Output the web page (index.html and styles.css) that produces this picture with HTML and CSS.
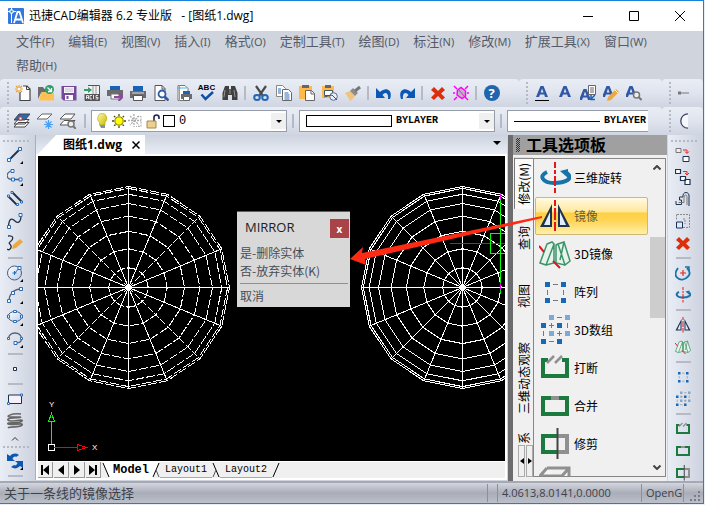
FILE: index.html
```
<!DOCTYPE html>
<html lang="zh-CN">
<head>
  <meta charset="UTF-8">
  <meta name="viewport" content="width=device-width, initial-scale=1.0">
  <title>迅捷CAD编辑器 6.2 专业版 - [图纸1.dwg]</title>
  <link rel="stylesheet" href="styles.css">
</head>
<body>
  <!-- Icon library -->
  <svg class="icon-library" aria-hidden="true">
    <defs>
      <linearGradient id="sky" x1="0" y1="0" x2="1" y2="1"><stop offset="0" stop-color="#fff"/><stop offset="1" stop-color="#b9cdec"/></linearGradient>
      <linearGradient id="bulb" x1="0" y1="0" x2="1" y2="1"><stop offset="0" stop-color="#fffbb0"/><stop offset="1" stop-color="#c9b800"/></linearGradient>
    </defs>
    <symbol id="i-new" viewBox="0 0 16 16"><path d="M5 7v8.500h10V4l-3-3H8" fill="#fff" stroke="#444" stroke-width="1.200"/><path d="M11.500 1v3.500H15" fill="none" stroke="#444"/><path d="M4 0v8M0 4h8M1 1l6 6M7 1L1 7" stroke="#f0a030" stroke-width="1.200"/><circle cx="4" cy="4" r="1.500" fill="#fff"/></symbol>
    <symbol id="i-open" viewBox="0 0 16 16"><path d="M0 2h5l1.500 2H10v4H3L0 14z" fill="#6b6b6b"/><path d="M3.500 7H14l2 1v7.500H1z" fill="#ffc051"/><circle cx="11.500" cy="4.500" r="4.500" fill="#2e9e6b"/><path d="M9.500 2.500l4 4M13.500 3v3.500H10" fill="none" stroke="#fff" stroke-width="1.300"/></symbol>
    <symbol id="i-save" viewBox="0 0 16 16"><path d="M.500 1h15v14.500h-13l-2-2z" fill="#76489b"/><path d="M3 2h10v6H3z" fill="#f6f1fa"/><path d="M4 4h8M4 6h8" stroke="#c4c4c4"/><path d="M4 10h8v5H4z" fill="#fff"/><path d="M5.500 11h2v3h-2z" fill="#76489b"/></symbol>
    <symbol id="i-acis" viewBox="0 0 16 16"><path d="M4 .500h11.500v15H1V9" fill="#f2f2f2" stroke="#555"/><path d="M0 5h5" stroke="#2e9e6b" stroke-width="2"/><path d="M4 2l4 3-4 3z" fill="#2e9e6b"/><path d="M9 1v8M12 1v8" stroke="#999"/><path d="M1 9h15v6.500H1z" fill="#555"/><path d="M2.500 14v-3.500h2V14M2.500 12.500h2M8 10.500H6V14h2M9.500 10v4M14 10.500h-2v2h2V14h-2.500" fill="none" stroke="#fff" stroke-width=".8"/></symbol>
    <symbol id="i-print" viewBox="0 0 16 16"><path d="M3 1h10v5H3z" fill="#1c62b4"/><path d="M0 6h16v7H0z" fill="#6b6b6b"/><path d="M3.500 10.500h9v5h-9z" fill="#fff" stroke="#555"/><path d="M2 8h12" stroke="#ddd"/></symbol>
    <symbol id="i-print-send" viewBox="0 0 16 16"><path d="M3 1h10v4H3z" fill="#1c62b4"/><path d="M0 5h16v6H0z" fill="#6b6b6b"/><path d="M4 9h8v5H4z" fill="#fff" stroke="#777"/><path d="M7 12h8M11.500 8l4 4-4 4" fill="none" stroke="#8c4a9e" stroke-width="2"/></symbol>
    <symbol id="i-preview" viewBox="0 0 16 16"><path d="M2 .500h7l3 3v12H2z" fill="#fff" stroke="#555"/><path d="M9 .500V4h3" fill="none" stroke="#555"/><circle cx="9" cy="9" r="3.500" fill="#fff" stroke="#2a5ca8" stroke-width="1.800"/><path d="M11.500 11.500l4 4" stroke="#2a5ca8" stroke-width="2.500"/></symbol>
    <symbol id="i-page" viewBox="0 0 16 16"><path d="M2 .500h7l3 3v12H2z" fill="#fff" stroke="#777"/><path d="M3.500 0v16M1 3h10" stroke="#4bb4e0"/><path d="M7 6h7v3H7z" fill="#1c62b4"/><path d="M5 9h11v5H5z" fill="#6b6b6b"/><path d="M7.500 11.500h6v4h-6z" fill="#fff" stroke="#666"/></symbol>
    <symbol id="i-spell" viewBox="0 0 16 16"><path d="M2.500 9.500l4 4.500 7.500-7" fill="none" stroke="#0b4fa8" stroke-width="2.500"/></symbol>
    <symbol id="i-find" viewBox="0 0 16 16"><path d="M3 1h4v3h2V1h4l2.500 7v7H10v-5H6v5H.500V8z" fill="#404040"/><path d="M3 5l-1 7M12 5l1 7M8 4v5" stroke="#aaa" stroke-width=".8"/></symbol>
    <symbol id="i-cut" viewBox="0 0 16 16"><path d="M3 1l7 10M13 1L6 11" stroke="#4b4b4b" stroke-width="2.200"/><ellipse cx="4" cy="12.500" rx="2.800" ry="2.500" fill="none" stroke="#2468b4" stroke-width="2"/><ellipse cx="12" cy="12.500" rx="2.800" ry="2.500" fill="none" stroke="#2468b4" stroke-width="2"/></symbol>
    <symbol id="i-copy" viewBox="0 0 16 16"><path d="M.500.500h6l3 3v8h-9z" fill="#fff" stroke="#888"/><path d="M2 4h3M2 6h3M2 8h3" stroke="#2a6cb4"/><path d="M6.500 4.500h6l3 3v8h-9z" fill="#fff" stroke="#666"/><path d="M8.500 8h4M8.500 10h5M8.500 12h5M8.500 14h5" stroke="#2a6cb4"/></symbol>
    <symbol id="i-paste" viewBox="0 0 16 16"><path d="M0 1h13v13H0z" fill="#fdb94a"/><path d="M3 0h7v3H3z" fill="#666"/><path d="M6.500 5.500h6l3 3v7h-9z" fill="#fff" stroke="#666"/><path d="M12 5.500V9h3.500" fill="none" stroke="#666"/></symbol>
    <symbol id="i-paste-block" viewBox="0 0 16 16"><path d="M0 1h12v12H0z" fill="#fdb94a"/><path d="M3 0h6v3H3z" fill="#666"/><path d="M2.500 5.500h8v5h-8z" fill="#fff" stroke="#456"/><circle cx="11.500" cy="11.500" r="3.800" fill="#e6eefb" stroke="#5a6b8c"/><path d="M2 12l8-2 5 5" fill="none" stroke="#456"/></symbol>
    <symbol id="i-brush" viewBox="0 0 16 16"><path d="M0 8l5-2 5 5-4 5c-2-1-3-4-6-8z" fill="#efc47e"/><path d="M5 6l3-3 5 5-3 3z" fill="#8c8c8c"/><path d="M10 6l5-4" stroke="#777" stroke-width="3"/></symbol>
    <symbol id="i-undo" viewBox="0 0 16 16"><path d="M0 3v10h9L6.500 10C9 6 13 8 12 14h2C17 6 11 1 4 7z" fill="#0b57b4"/></symbol>
    <symbol id="i-redo" viewBox="0 0 16 16"><path d="M16 3v10H7l2.500-3C7 6 3 8 4 14H2C-1 6 5 1 12 7z" fill="#0b57b4"/></symbol>
    <symbol id="i-delete" viewBox="0 0 16 16"><path d="M4 2l4 4 4-4 3 3-4 3.500 4 4L12 15l-4-4-4 4-3-2.500 4-4L1 5z" fill="#dc2e08"/></symbol>
    <symbol id="i-purge" viewBox="0 0 16 16"><path d="M1 1l3 3M15 1l-3 3M1 15l3-3M15 15l-3-3M0 8h2M14 8h2" stroke="#f0f" stroke-width="1.500"/><path d="M4.500 5L8 2.500 12.500 6v5L9 13.500 4 10z" fill="#bbb" stroke="#f0f" stroke-width="1.500"/><path d="M5 4l7 8" stroke="#f0f"/></symbol>
    <symbol id="i-layers" viewBox="0 0 16 16"><path d="M4 9.500h11L11 14H0zM4 6.500h11L11 11H0z" fill="#fff" stroke="#444"/><path d="M5 1h11l-5 6H0z" fill="#2a6cb4" stroke="#444"/><path d="M5 4h3v3H5z" fill="#fff" stroke="#e21"/></symbol>
    <symbol id="i-layer-freeze" viewBox="0 0 16 16"><path d="M5 1h10l-5 5H0z" fill="#fff" stroke="#666"/><path d="M11.500 7v9M7 11.500h9M8.500 8.500l6 6M14.500 8.500l-6 6" stroke="#4aa0f0" stroke-width="1.200"/></symbol>
    <symbol id="i-layer-find" viewBox="0 0 16 16"><path d="M4 7.500h11L11 12H0zM5 1h10l-4 5H0z" fill="#fff" stroke="#555"/><circle cx="11" cy="11" r="3" fill="#eee" stroke="#777" stroke-width="1.500"/><path d="M13 13l3 3" stroke="#777" stroke-width="2"/></symbol>
    <symbol id="i-bulb" viewBox="0 0 16 16"><path d="M8 0a5.500 5.500 0 0 1 3 9.500V12H5.500V9.500A5.500 5.500 0 0 1 8 0z" fill="url(#bulb)" stroke="#b5a500" stroke-width=".6"/><path d="M5.500 12h5.500v3h-4z" fill="#7b93a8"/></symbol>
    <symbol id="i-sun" viewBox="0 0 16 16"><path d="M8 1v14M1 8h14M3 3l10 10M13 3L3 13" stroke="#554b00" stroke-width="1.300" stroke-dasharray="2 1"/><circle cx="8" cy="8" r="4.200" fill="#ff0" stroke="#7b7000"/></symbol>
    <symbol id="i-vpfreeze" viewBox="0 0 16 16"><path d="M6 1v13M0 7.500h13M2 3l9 9M11 3l-9 9" stroke="#aaa" stroke-width="1.300" stroke-dasharray="2 1"/><path d="M9 3.500h4v10H8" fill="none" stroke="#aaa" stroke-dasharray="2 1"/></symbol>
    <symbol id="i-lock" viewBox="0 0 16 16"><path d="M9 8V4.500a2.500 2.500 0 0 1 5 0V6" fill="none" stroke="#225" stroke-width="1.600"/><path d="M2 8h9v7H2z" fill="#edcf8f" stroke="#a88b45"/></symbol>
    <symbol id="i-style" viewBox="0 0 16 16"><path d="M2 12L6.500 1h3L14 12h-3l-.8-2.500H6L5 12zM6.700 7.500h2.800L8 3.500z" fill="#2f57a5" fill-rule="evenodd"/></symbol>
    <symbol id="i-page-corner" viewBox="0 0 16 16"><path d="M8.500.500h7v9h-7z" fill="#fff" stroke="#666"/><path d="M10 3h4M10 5h4M10 7h4" stroke="#666"/><path d="M15 10l-4 4M11 10v4.500h4" fill="none" stroke="#1c62b4" stroke-width="1.500"/></symbol>
    <symbol id="i-pencil" viewBox="0 0 16 16"><path d="M4 16l1-4 8-8 3 3-8 8z" fill="#eda83f"/><path d="M12 5l3 3" stroke="#fff"/></symbol>
    <symbol id="i-loupe" viewBox="0 0 16 16"><circle cx="10.500" cy="10" r="3" fill="#eee" stroke="#777" stroke-width="1.500"/><path d="M12.500 12l3 3" stroke="#777" stroke-width="2"/></symbol>
    <symbol id="i-dash" viewBox="0 0 16 16"><path d="M3 8h9" stroke="#777"/><path d="M1 6.500h3v3H1z" fill="#777"/></symbol>
    <symbol id="i-halfarc" viewBox="0 0 16 16"><path d="M11 .8A7.200 7.200 0 1 0 11 15.200z" fill="#f5f8fd"/><path d="M11 .8A7.200 7.200 0 1 0 11 15.200" fill="none" stroke="#446" stroke-width="1.300"/></symbol>

    <!-- draw tools -->
    <symbol id="i-line" viewBox="0 0 16 16"><path d="M2 13L13 2" stroke="#203048" stroke-width="1.800"/><path d="M.500 11.500h3v3h-3zM11.500.500h3v3h-3z" fill="#fff" stroke="#2a6cb4"/></symbol>
    <symbol id="i-pline" viewBox="0 0 16 16"><path d="M5 1.500C-2 4-1 10 5 10.500h8" fill="none" stroke="#4b6282" stroke-width="1.300"/><path d="M4 .500h3v3H4zM4.500 9h3v3h-3zM12 9h3v3h-3z" fill="#fff" stroke="#2a6cb4"/></symbol>
    <symbol id="i-mline" viewBox="0 0 16 16"><path d="M1 5l9 9M5 1l10 10" stroke="#203048" stroke-width="1.800"/><path d="M.500 4h2v2h-2zM4 .500h2v2H4zM9.500 12.500h2v2h-2zM13.500 10h2v2h-2z" fill="#fff" stroke="#2a6cb4"/></symbol>
    <symbol id="i-spline" viewBox="0 0 16 16"><path d="M1.500 14C2 3 6 6 8 8s6 3 6-6" fill="none" stroke="#203048" stroke-width="1.300"/><path d="M.500 12.500h3v3h-3zM12 .500h3v3h-3z" fill="#fff" stroke="#2a6cb4"/></symbol>
    <symbol id="i-sketch" viewBox="0 0 16 16"><path d="M1 1c7-1 5 4 2 6s4 3 0 7c-1 1-2 1-3 0" fill="none" stroke="#203048" stroke-width="1.300"/><path d="M5 14l1-4 7-6 3 3-7 6z" fill="#eda83f"/></symbol>
    <symbol id="i-circle" viewBox="0 0 16 16"><circle cx="7.500" cy="8" r="7" fill="url(#sky)" stroke="#4b5f7e"/><path d="M7.500 6v4M5.500 8h4M8 8l4-5" stroke="#2a6cb4"/><path d="M11 1.500h3v3h-3z" fill="#fff" stroke="#2a6cb4"/></symbol>
    <symbol id="i-arc" viewBox="0 0 16 16"><path d="M2 14C2 7 7 2 14 2" fill="none" stroke="#4b5f7e" stroke-width="1.300"/><path d="M.500 12.500h3v3h-3zM4.500 4.500h3v3h-3zM12.500.500h3v3h-3z" fill="#fff" stroke="#2a6cb4"/></symbol>
    <symbol id="i-ellipse" viewBox="0 0 16 16"><ellipse cx="8" cy="7.500" rx="7" ry="5" fill="url(#sky)" stroke="#4b5f7e"/><path d="M.500 6h2v3h-2zM13.500 6h2v3h-2zM6.500 1.500h3v2h-3zM6.500 11.500h3v2h-3z" fill="#fff" stroke="#2a6cb4"/></symbol>
    <symbol id="i-earc" viewBox="0 0 16 16"><path d="M1.500 8C1 0 15 0 14.500 8c0 3-3 4-6 4" fill="none" stroke="#4b5f7e" stroke-width="1.300"/><path d="M.500 6.500h2v2h-2zM13.500 6.500h2v2h-2zM7 10.500h3v3H7z" fill="#fff" stroke="#2a6cb4"/></symbol>
    <symbol id="i-point" viewBox="0 0 16 16"><path d="M6.500 6.500h3v3h-3z" fill="#fff" stroke="#203048"/></symbol>
    <symbol id="i-rect" viewBox="0 0 16 16"><path d="M1.500 4h13v8.500h-13z" fill="#f4f1fa" stroke="#203048"/><path d="M.500 11.500h2v2h-2zM13.500 3h2v2h-2z" fill="#fff" stroke="#2a6cb4"/></symbol>
    <symbol id="i-helix" viewBox="0 0 16 16"><path d="M14 1C4 0-3 4 4 4h9c4 1-14 0-12 3s16-2 14 1-16 1-14 3 16-2 14 1-12 1-14 3" fill="none" stroke="#666" stroke-width="1.600"/></symbol>
    <symbol id="i-refresh" viewBox="0 0 16 16"><path d="M0 1l3 2c3-3 6-3 9-1L9 4C8 3 6 4 5.500 6L8 8H0zM16 15l-3-2c-3 3-6 3-9 1l3-2c1 1 3 0 3.500-2L8 8h8z" fill="#0b57b4"/></symbol>

    <!-- modify tools -->
    <symbol id="i-copy-obj" viewBox="0 0 16 16"><path d="M1 1.500h5v4H1z" fill="#eee" stroke="#777"/><path d="M8 3h4v3M10 4.500l2 2 2-2" fill="none" stroke="#e22"/><path d="M8 9.500h6v5H8z" fill="#fff" stroke="#1d3350"/></symbol>
    <symbol id="i-copy-multi" viewBox="0 0 16 16"><path d="M.500.500h5v4h-5zM5.500 7.500h5v4h-5zM10 10.500h5v5h-5z" fill="#fff" stroke="#1d3350" stroke-width="1.200"/><path d="M8 2.500h4v3M10 4l2 2 2-2" fill="none" stroke="#e22"/></symbol>
    <symbol id="i-offset" viewBox="0 0 16 16"><path d="M1 13.500h5.500V9h-2V6H8c-1-6 7-6 6 0v9M1 10v3.500" fill="none" stroke="#1d3350"/><path d="M3.500 11.500H9V7.500C9 3 12 3 12 6v8" fill="none" stroke="#777"/></symbol>
    <symbol id="i-scale" viewBox="0 0 16 16"><path d="M2 1.500h12.500v13H8M1.500 1.500V7M8 6h2v5" fill="none" stroke="#888" stroke-dasharray="2 1"/><path d="M1.500 9h6v6h-6z" fill="#dceaff" stroke="#1d3350"/></symbol>
    <symbol id="i-rotate" viewBox="0 0 16 16"><path d="M3 3C-4 13 6 15 8 14.500S19 10 12 3" fill="none" stroke="#1874a8" stroke-width="1.800"/><path d="M10 2h4v4" fill="none" stroke="#1874a8" stroke-width="1.500"/><path d="M8 5v6M5 8h6" stroke="#e22" stroke-width="1.200"/></symbol>
    <symbol id="i-rotate3d" viewBox="0 0 32 32"><path d="M8 10C-1 14 4 21 15 21s20-4 13-10" fill="none" stroke="#1874a8" stroke-width="4"/><path d="M21 9l8-2v9z" fill="#1874a8"/><path d="M16 0v6M16 8v4M16 14v10M16 26v5" stroke="#e8141c" stroke-width="2"/></symbol>
    <symbol id="i-mirror" viewBox="0 0 32 32"><path d="M13 4v23H1zM19 4v23h12z" fill="#1d3350"/><path d="M11 12v13H5zM21 12v13h6z" fill="#e2edfb"/><path d="M16 0v6M16 8v12M16 22v9" stroke="#e8141c" stroke-width="2"/></symbol>
    <symbol id="i-mirror3d" viewBox="0 0 32 32"><path d="M8 6l5-2 2 2-8 21-6-2zM13 4l2 2v19l-8 2M19 6l6-2 6 19-5 4zM19 6l-2 1v18l9 2M25 4l-4 18" fill="#e7f4ec" stroke="#3d9468" stroke-width="1.500"/><path d="M0 8l5 6M14 23l7 7" stroke="#e8141c" stroke-width="2"/></symbol>
    <symbol id="i-array" viewBox="0 0 32 32"><path d="M6 6h5v5H6zM22 6h5v5h-5zM6 22h5v5H6zM22 22h5v5h-5z" fill="#1768b8"/><path d="M14 8.500h5M14 24.500h5M8.500 14v5M24.500 14v5" stroke="#777"/></symbol>
    <symbol id="i-array3d" viewBox="0 0 32 32"><path d="M10 1h5v5h-5zM26 1h5v5h-5zM10 17h5v5h-5zM26 17h5v5h-5z" fill="#7fa9d4"/><path d="M2 9h5v5H2zM18 9h5v5h-5zM2 25h5v5H2zM18 25h5v5h-5z" fill="#1768b8"/><path d="M18 3.500h5M10 11.500h5M12.500 9v5M28.500 9v5M4.500 17v5M18 19.500h5M20.500 17v5M10 27.500h5" stroke="#777"/></symbol>
    <symbol id="i-break" viewBox="0 0 32 32"><path d="M9 8H4v16h24V8h-5" fill="none" stroke="#1c7a3e" stroke-width="4"/><path d="M8 11l7-7M16 11l7-7" stroke="#909090" stroke-width="2.500"/></symbol>
    <symbol id="i-join" viewBox="0 0 32 32"><path d="M4 8h24v16H4z" fill="none" stroke="#1c7a3e" stroke-width="4"/><path d="M12 6h8v4h-8z" fill="#909090"/></symbol>
    <symbol id="i-trim" viewBox="0 0 32 32"><path d="M19 8h9v16h-9" fill="none" stroke="#909090" stroke-width="4"/><path d="M18 8H4v16h14" fill="none" stroke="#1c7a3e" stroke-width="4"/><path d="M18.500 0v31" stroke="#444" stroke-width="2"/></symbol>
    <symbol id="i-extend" viewBox="0 0 32 32"><path d="M8 2h22v16h-8M8 2L1 10h22l7-8" fill="#f5f5f5" stroke="#909090" stroke-width="3"/></symbol>
  </svg>

  <div class="window">
    <header class="title-bar">
      <svg class="app-logo" viewBox="0 0 16 16"><rect width="16" height="16" rx="1" fill="#3478dc"/><path d="M3.500 0v15M0 3.500h8" stroke="#fff"/><path d="M2 2h3v3H2z" fill="#3478dc" stroke="#fff"/><path d="M6 15l3.500-11h2L15 15M7.500 11.500H13" fill="none" stroke="#fff" stroke-width="1.800"/></svg>
      <h1>迅捷CAD编辑器 6.2 专业版 &nbsp;&nbsp;- [图纸1.dwg]</h1>
      <div class="window-controls">
        <button aria-label="最小化"><svg viewBox="0 0 10 10"><path d="M0 5.500h10"/></svg></button>
        <button aria-label="最大化"><svg viewBox="0 0 10 10"><path d="M.500.500h9v9h-9z"/></svg></button>
        <button aria-label="关闭"><svg viewBox="0 0 10 10"><path d="M0 0l10 10M10 0L0 10"/></svg></button>
      </div>
    </header>

    <nav class="menu-bar">
      <button>文件<small>(F)</small></button>
      <button>编辑<small>(E)</small></button>
      <button>视图<small>(V)</small></button>
      <button>插入<small>(I)</small></button>
      <button>格式<small>(O)</small></button>
      <button>定制工具<small>(T)</small></button>
      <button>绘图<small>(D)</small></button>
      <button>标注<small>(N)</small></button>
      <button>修改<small>(M)</small></button>
      <button>扩展工具<small>(X)</small></button>
      <button>窗口<small>(W)</small></button>
      <button>帮助<small>(H)</small></button>
    </nav>

    <div class="toolbar-row">
      <div class="toolbar main-tools">
        <span class="grip"></span>
        <button class="tool" aria-label="新建"><svg><use href="#i-new"/></svg></button>
        <button class="tool" aria-label="打开"><svg><use href="#i-open"/></svg></button>
        <button class="tool" aria-label="保存"><svg><use href="#i-save"/></svg></button>
        <button class="tool" aria-label="导入ACIS"><svg><use href="#i-acis"/></svg></button>
        <button class="tool" aria-label="发布"><svg><use href="#i-print-send"/></svg></button>
        <button class="tool" aria-label="打印"><svg><use href="#i-print"/></svg></button>
        <button class="tool" aria-label="打印预览"><svg><use href="#i-preview"/></svg></button>
        <button class="tool" aria-label="页面设置"><svg><use href="#i-page"/></svg></button>
        <button class="tool spell" aria-label="拼写检查"><span>ABC</span><svg><use href="#i-spell"/></svg></button>
        <button class="tool" aria-label="查找"><svg><use href="#i-find"/></svg></button>
        <span class="separator"></span>
        <button class="tool" aria-label="剪切"><svg><use href="#i-cut"/></svg></button>
        <button class="tool" aria-label="复制"><svg><use href="#i-copy"/></svg></button>
        <button class="tool" aria-label="粘贴"><svg><use href="#i-paste"/></svg></button>
        <button class="tool" aria-label="粘贴为块"><svg><use href="#i-paste-block"/></svg></button>
        <button class="tool" aria-label="特性匹配"><svg><use href="#i-brush"/></svg></button>
        <span class="separator"></span>
        <button class="tool" aria-label="撤消"><svg><use href="#i-undo"/></svg></button>
        <button class="tool" aria-label="重做"><svg><use href="#i-redo"/></svg></button>
        <span class="separator"></span>
        <button class="tool" aria-label="删除"><svg><use href="#i-delete"/></svg></button>
        <button class="tool" aria-label="清理"><svg><use href="#i-purge"/></svg></button>
        <span class="separator"></span>
        <button class="tool" aria-label="帮助"><span class="help-mark">?</span></button>
      </div>
      <div class="toolbar text-tools">
        <span class="grip"></span>
        <button class="tool underlined" aria-label="多行文字"><svg><use href="#i-style"/></svg></button>
        <button class="tool" aria-label="单行文字"><svg><use href="#i-style"/></svg></button>
        <button class="tool" aria-label="文字样式"><svg><use href="#i-style" x="-3" y="3"/><use href="#i-page-corner"/></svg></button>
        <button class="tool" aria-label="编辑文字"><svg><use href="#i-style" x="-3"/><use href="#i-pencil"/></svg></button>
        <button class="tool" aria-label="查找文字"><svg><use href="#i-style" x="-3"/><use href="#i-loupe"/></svg></button>
      </div>
      <div class="toolbar edge-tools">
        <span class="grip"></span>
        <button class="tool" aria-label="标注"><svg><use href="#i-dash"/></svg></button>
      </div>
    </div>

    <div class="toolbar-row">
      <div class="toolbar layer-tools">
        <span class="grip"></span>
        <button class="tool" aria-label="图层"><svg><use href="#i-layers"/></svg></button>
        <button class="tool" aria-label="冻结图层"><svg><use href="#i-layer-freeze"/></svg></button>
        <button class="tool" aria-label="图层查找"><svg><use href="#i-layer-find"/></svg></button>
        <span class="separator"></span>
        <button class="combo layer-combo" aria-label="当前图层">
          <svg><use href="#i-bulb"/></svg><svg><use href="#i-sun"/></svg><svg><use href="#i-vpfreeze"/></svg><svg><use href="#i-lock"/></svg>
          <span class="swatch"></span><span>0</span><span class="drop"></span>
        </button>
        <span class="separator"></span>
        <button class="combo" aria-label="颜色"><span class="color-box"></span><span>BYLAYER</span><span class="drop"></span></button>
        <span class="separator"></span>
        <button class="combo line-combo" aria-label="线型"><span class="line-sample"></span><span>BYLAYER</span></button>
      </div>
      <div class="toolbar edge-tools">
        <span class="grip"></span>
        <button class="tool" aria-label="圆弧"><svg><use href="#i-halfarc"/></svg></button>
      </div>
    </div>

    <main class="workspace">
      <aside class="side-tools">
        <span class="grip"></span>
        <button class="tool more" aria-label="直线"><svg><use href="#i-line"/></svg></button>
        <button class="tool more" aria-label="多段线"><svg><use href="#i-pline"/></svg></button>
        <button class="tool" aria-label="多线"><svg><use href="#i-mline"/></svg></button>
        <button class="tool" aria-label="样条曲线"><svg><use href="#i-spline"/></svg></button>
        <button class="tool" aria-label="草图"><svg><use href="#i-sketch"/></svg></button>
        <span class="separator"></span>
        <button class="tool more" aria-label="圆"><svg><use href="#i-circle"/></svg></button>
        <button class="tool more" aria-label="圆弧"><svg><use href="#i-arc"/></svg></button>
        <button class="tool more" aria-label="椭圆"><svg><use href="#i-ellipse"/></svg></button>
        <button class="tool more" aria-label="椭圆弧"><svg><use href="#i-earc"/></svg></button>
        <span class="separator"></span>
        <button class="tool" aria-label="点"><svg><use href="#i-point"/></svg></button>
        <span class="separator"></span>
        <button class="tool" aria-label="矩形"><svg><use href="#i-rect"/></svg></button>
        <button class="tool" aria-label="螺旋"><svg><use href="#i-helix"/></svg></button>
        <button class="expand" aria-label="更多"><svg viewBox="0 0 8 4"><path d="M1 3.500l3-3 3 3" fill="none" stroke="#333"/></svg></button>
        <span class="grip"></span>
        <button class="tool more" aria-label="刷新"><svg><use href="#i-refresh"/></svg></button>
        <span class="separator"></span>
      </aside>

      <section class="document">
        <div class="doc-tabs">
          <div class="doc-tab"><span>图纸1.dwg</span><button aria-label="关闭图纸"><svg viewBox="0 0 8 8"><path d="M.500.500l7 7M7.500.500l-7 7" stroke="#000" stroke-width="1.500"/></svg></button></div>
          <button class="drop" aria-label="图纸列表"></button>
        </div>
        <div class="viewport">
          <svg class="drawing" id="drawing">
            <g id="wires" fill="none" stroke="#fff" shape-rendering="crispEdges"></g>
            <g fill="none" shape-rendering="crispEdges">
              <path d="M412 87.500h56" stroke="#f00"/>
              <path d="M452.500 77.500h30v20h-30zM462.500 37v101" stroke="#0f0"/>
              <path d="M462.500 37v6M462.500 127v7" stroke="#f0f"/>
              <path d="M10.500 288.500h6v6h-6z" stroke="#fff"/>
              <path d="M13.500 288v-23M10.500 265.500h6l-3-8z" stroke="#0f0"/>
              <path d="M16 291.500h24M39.500 288.500v6l9-3z" stroke="#f00"/>
            </g>
            <text x="11" y="251">Y</text>
            <text x="54" y="294">X</text>
          </svg>
          <div class="prompt">
            <div class="prompt-head"><strong>MIRROR</strong><button aria-label="关闭">x</button></div>
            <button>是-删除实体</button>
            <button>否-放弃实体(K)</button>
            <hr>
            <button>取消</button>
          </div>
        </div>
        <div class="layout-tabs">
          <button class="step" aria-label="第一个"><svg viewBox="0 0 10 10"><path d="M1 0h2v10H1zM9 0v10L3 5z"/></svg></button>
          <button class="step" aria-label="上一个"><svg viewBox="0 0 10 10"><path d="M8 0v10L2 5z"/></svg></button>
          <button class="step" aria-label="下一个"><svg viewBox="0 0 10 10"><path d="M2 0v10l6-5z"/></svg></button>
          <button class="step" aria-label="最后一个"><svg viewBox="0 0 10 10"><path d="M7 0h2v10H7zM1 0v10l6-5z"/></svg></button>
          <svg class="slant" viewBox="0 0 8 16"><path d="M1 0h7v16H7z" fill="#fff"/><path d="M1 1l6 14" stroke="#000"/></svg>
          <button class="layout active">Model</button>
          <svg class="slant" viewBox="0 0 8 16"><path d="M0 0h7L1 16H0z" fill="#fff"/><path d="M7 1L1 15" stroke="#000"/><path d="M4 8l3 7" stroke="#555"/></svg>
          <button class="layout">Layout1</button>
          <svg class="slant" viewBox="0 0 8 16"><path d="M1 1l6 14" stroke="#000"/><path d="M4 8l-3 7" stroke="#555"/></svg>
          <button class="layout">Layout2</button>
          <svg class="slant" viewBox="0 0 8 16"><path d="M7 1L1 15" stroke="#000"/></svg>
        </div>
      </section>

      <section class="palette">
        <h2><span class="dots"></span>工具选项板</h2>
        <div class="palette-body">
          <div class="palette-tabs">
            <button class="active">修改(M)</button>
            <button>查询</button>
            <button>视图</button>
            <button>三维动态观察</button>
            <button class="last">系</button>
            <div class="tab-scroll">
              <button aria-label="向左"><svg viewBox="0 0 4 6"><path d="M4 0v6L0 3z"/></svg></button>
              <button aria-label="向右"><svg viewBox="0 0 4 6"><path d="M0 0v6l4-3z"/></svg></button>
            </div>
          </div>
          <div class="palette-list">
            <div class="commands">
              <button><svg><use href="#i-rotate3d"/></svg>三维旋转</button>
              <button class="active"><svg><use href="#i-mirror"/></svg>镜像</button>
              <button><svg><use href="#i-mirror3d"/></svg>3D镜像</button>
              <button><svg><use href="#i-array"/></svg>阵列</button>
              <button><svg><use href="#i-array3d"/></svg>3D数组</button>
              <button><svg><use href="#i-break"/></svg>打断</button>
              <button><svg><use href="#i-join"/></svg>合并</button>
              <button><svg><use href="#i-trim"/></svg>修剪</button>
              <button aria-label="延伸"><svg><use href="#i-extend"/></svg></button>
            </div>
            <div class="scrollbar">
              <svg viewBox="0 0 8 5"><path d="M.500 4.500L4 1l3.500 3.500"/></svg>
              <span class="thumb"></span>
              <svg viewBox="0 0 8 5"><path d="M.500.500L4 4 7.500.500"/></svg>
            </div>
          </div>
        </div>
      </section>

      <aside class="side-tools modify-tools">
        <span class="grip"></span>
        <button class="tool" aria-label="复制实体"><svg><use href="#i-copy-obj"/></svg></button>
        <button class="tool" aria-label="多重复制"><svg><use href="#i-copy-multi"/></svg></button>
        <button class="tool" aria-label="偏移"><svg><use href="#i-offset"/></svg></button>
        <button class="tool" aria-label="缩放"><svg><use href="#i-scale"/></svg></button>
        <button class="tool" aria-label="删除"><svg><use href="#i-delete"/></svg></button>
        <span class="separator"></span>
        <button class="tool" aria-label="旋转"><svg><use href="#i-rotate"/></svg></button>
        <button class="tool" aria-label="三维旋转"><svg><use href="#i-rotate3d"/></svg></button>
        <span class="separator"></span>
        <button class="tool" aria-label="镜像"><svg><use href="#i-mirror"/></svg></button>
        <button class="tool" aria-label="3D镜像"><svg><use href="#i-mirror3d"/></svg></button>
        <span class="separator"></span>
        <button class="tool" aria-label="阵列"><svg><use href="#i-array"/></svg></button>
        <button class="tool" aria-label="3D数组"><svg><use href="#i-array3d"/></svg></button>
        <span class="separator"></span>
        <button class="tool" aria-label="打断"><svg><use href="#i-break"/></svg></button>
        <button class="tool" aria-label="合并"><svg><use href="#i-join"/></svg></button>
        <button class="tool" aria-label="修剪"><svg><use href="#i-trim"/></svg></button>
      </aside>

      <svg class="callout" viewBox="0 0 194 50"><path d="M0 43L13 31l-1 6L192 0v2L15 43l1 6z" fill="#ff2a14"/></svg>
    </main>

    <footer class="status-bar">
      <span class="message">关于一条线的镜像选择</span>
      <span class="spacer"></span>
      <span class="coords">4.0613,8.0141,0.0000</span>
      <span class="renderer">OpenG</span>
      <svg class="resize" viewBox="0 0 12 12"><path d="M9 1h2v2H9zM5 5h2v2H5zM9 5h2v2H9zM1 9h2v2H1zM5 9h2v2H5zM9 9h2v2H9z"/></svg>
    </footer>
  </div>

  <script>
    const SVG_NS = 'http://www.w3.org/2000/svg';
    const wires = document.getElementById('wires');
    const RADIUS = 101;
    const SIDES = 16;

    function addPath(d, dash) {
      const path = document.createElementNS(SVG_NS, 'path');
      path.setAttribute('d', d);
      if (dash) path.setAttribute('stroke-dasharray', dash);
      wires.appendChild(path);
    }

    // Top view of a sphere mesh: meridians plus latitude rings
    function drawSphere(cx, cy, dashed) {
      const point = (r, i) => {
        const a = i * 2 * Math.PI / SIDES;
        return (cx + r * Math.sin(a)).toFixed(1) + ' ' + (cy - r * Math.cos(a)).toFixed(1);
      };
      for (let i = 0; i < SIDES; i++) {
        addPath('M' + cx + ' ' + cy + 'L' + point(RADIUS, i), dashed && i % 4 === 2 ? '7 2' : '');
      }
      for (let k = 1; k <= SIDES / 2; k++) {
        const r = RADIUS * Math.sin(k * Math.PI / SIDES);
        const pts = [];
        for (let i = 0; i < SIDES; i++) pts.push(point(r, i));
        addPath('M' + pts.join('L') + 'Z', dashed ? '9 2' : '');
      }
    }

    drawSphere(90.5, 131.5, true);
    drawSphere(424.5, 131.5, false);
  </script>
</body>
</html>
```
FILE: styles.css
```
* {
  box-sizing: border-box;
}
body {
  margin: 0;
  background: #e9eef4;
  font-family: "Open Sans", "Noto Sans CJK SC", sans-serif;
  font-size: 12px;
  line-height: 16px;
}
button {
  margin: 0;
  padding: 0;
  border: none;
  background: none;
  font: inherit;
  color: inherit;
}
svg {
  display: block;
  flex: none;
}
.icon-library {
  position: absolute;
  width: 0;
  height: 0;
}
.window {
  display: flex;
  flex-direction: column;
  height: calc(100vh - 1px);
  margin-right: 1px;
  border: 1px solid #1883d7;
  border-left: none;
  background: #d0d4dd;
}

/* Title and menu */
.title-bar {
  display: flex;
  align-items: center;
  height: 30px;
  padding-left: 8px;
  background: #fff;
}
.app-logo {
  width: 16px;
  height: 16px;
  margin-right: 5px;
}
.title-bar h1 {
  flex: 1;
  margin: 0;
  font-size: 12px;
  font-weight: normal;
}
.window-controls {
  display: flex;
}
.window-controls button {
  display: grid;
  place-items: center;
  width: 46px;
  height: 29px;
}
.window-controls svg {
  width: 10px;
  height: 10px;
  fill: none;
  stroke: #000;
}
.menu-bar {
  display: flex;
  flex-wrap: wrap;
  gap: 4px 14px;
  padding: 0 16px 4px;
  color: #555b68;
  font-size: 13px;
}
.menu-bar button {
  height: 20px;
}
.menu-bar small {
  font-family: "Noto Sans", sans-serif;
  font-size: 11px;
}

/* Toolbars */
.toolbar-row {
  display: flex;
  flex: none;
  height: 28px;
}
.toolbar {
  display: flex;
  align-items: center;
  padding-left: 7px;
  border-radius: 4px;
  background: linear-gradient(#e9edf5, #dfe4ee 50%, #cfd5e1);
}
.main-tools {
  width: 519px;
}
.text-tools {
  flex: 1;
}
.layer-tools {
  flex: 1;
  min-width: 0;
}
.layer-tools .separator {
  margin: 0 5px;
}
.edge-tools {
  flex: none;
  width: 41px;
  overflow: hidden;
}
.grip {
  flex: none;
  width: 2px;
  height: 22px;
  margin-right: 2px;
  background: repeating-linear-gradient(#b4b9c4 0 2px, transparent 2px 4px);
}
.layer-tools .grip {
  margin-right: 1px;
}
.tool {
  position: relative;
  display: grid;
  flex: none;
  place-items: center;
  width: 23px;
  height: 22px;
}
.tool svg {
  width: 16px;
  height: 16px;
}
.separator {
  flex: none;
  width: 2px;
  height: 14px;
  margin: 0 3px;
  background: #b5bac5;
}
.spell span {
  position: absolute;
  top: 2px;
  font-family: "Liberation Sans", sans-serif;
  font-size: 8px;
  font-weight: bold;
  line-height: 8px;
}
.underlined {
  background: linear-gradient(#000, #000) center 18px / 14px 1px no-repeat;
}
.help-mark {
  width: 16px;
  height: 16px;
  border-radius: 50%;
  background: #1f66ad;
  color: #fff;
  font-size: 13px;
  font-weight: bold;
}
.combo {
  display: flex;
  flex: none;
  align-items: center;
  gap: 4px;
  width: 196px;
  height: 22px;
  padding-left: 6px;
  border: 1px solid #979da8;
  background: #fff;
  font-family: "Liberation Mono", monospace;
  font-size: 10px;
  font-weight: bold;
}
.combo svg {
  width: 16px;
  height: 16px;
  margin-right: -3px;
}
.layer-combo {
  padding-left: 2px;
  font-size: 12px;
  font-weight: normal;
}
.swatch {
  width: 12px;
  height: 12px;
  margin-left: 1px;
  border: 1px solid #000;
}
.color-box {
  width: 86px;
  height: 12px;
  border: 1px solid #000;
}
.line-combo {
  flex: 1;
  width: auto;
  margin-right: 14px;
  border-right: none;
}
.line-sample {
  width: 86px;
  height: 1px;
  background: #000;
}
.drop {
  display: grid;
  place-items: center;
  width: 15px;
  height: 16px;
  margin-left: auto;
}
.combo .drop {
  background: #f0f0f0;
}
.drop::after {
  content: "";
  border: 4px solid transparent;
  border-top-color: #000;
  border-bottom: none;
}
.combo .drop::after {
  border-width: 3px 3px 0;
}

/* Workspace */
.workspace {
  position: relative;
  display: flex;
  flex: 1;
  min-height: 0;
}
.side-tools {
  display: flex;
  flex: none;
  flex-direction: column;
  width: 35px;
  padding: 5px 0 0 3px;
  overflow: hidden;
  background: linear-gradient(90deg, #e9edf5, #cdd3df);
}
.side-tools .grip {
  width: 27px;
  height: 2px;
  margin: 0 0 2px;
  background: repeating-linear-gradient(90deg, #b4b9c4 0 2px, transparent 2px 4px);
}
.side-tools .separator {
  width: 15px;
  height: 2px;
  margin: 3px 5px;
}
.more::after {
  content: "";
  position: absolute;
  right: 3px;
  bottom: 2px;
  width: 3px;
  height: 3px;
  background: #000;
  clip-path: polygon(100% 0, 100% 100%, 0 100%);
}
.expand {
  display: grid;
  flex: none;
  place-items: center;
  width: 23px;
  height: 14px;
}
.expand svg {
  width: 8px;
  height: 4px;
}
.modify-tools {
  margin-left: 1px;
}
.document {
  display: flex;
  flex: 1;
  flex-direction: column;
  min-width: 0;
  margin-bottom: 1px;
  border-left: 1px solid #a9aeb9;
  background: #fff;
}
.doc-tabs {
  display: flex;
  height: 19px;
  padding-right: 3px;
  background: linear-gradient(#cdd3df, #e8edf5);
}
.doc-tab {
  display: flex;
  align-items: center;
  gap: 10px;
  padding: 0 5px 0 27px;
  clip-path: polygon(20px 0, 100% 0, 100% 100%, 2px 100%);
  background: #fff;
  font-weight: bold;
}
.doc-tab svg {
  width: 8px;
  height: 8px;
}
.viewport {
  position: relative;
  flex: 1;
  min-height: 0;
  margin: 2px 2px 1px;
  overflow: hidden;
  background: #000;
}
.drawing {
  width: 100%;
  height: 100%;
}
.drawing text {
  fill: #fff;
  font-family: "Liberation Sans", sans-serif;
  font-size: 8px;
}
.prompt {
  position: absolute;
  top: 55px;
  left: 199px;
  display: flex;
  flex-direction: column;
  width: 113px;
  padding-bottom: 2px;
  border-top: 1px solid #2b6ca8;
  background: #d8d8d8;
  color: #484c55;
}
.prompt > button {
  height: 18px;
  padding-left: 3px;
  font-family: "Noto Sans CJK SC", sans-serif;
  line-height: 16px;
  text-align: left;
}
.prompt-head {
  display: flex;
  justify-content: space-between;
  margin-bottom: 6px;
  padding: 7px 1px 0 8px;
  color: #222;
}
.prompt-head strong {
  font-size: 13px;
  font-weight: normal;
}
.prompt-head button {
  width: 19px;
  height: 19px;
  background: #a94347;
  color: #fff;
  font-size: 10px;
  font-weight: bold;
}
.prompt hr {
  width: 108px;
  height: 1px;
  margin: 3px 2px 3px 3px;
  border: none;
  background: #909090;
}
.layout-tabs {
  display: flex;
  height: 16px;
  margin: 0 2px 2px;
  background: #f0f0f0;
  font-family: "Liberation Mono", monospace;
  font-size: 10px;
}
.step {
  display: grid;
  place-items: center;
  width: 15px;
  height: 16px;
  margin-right: 1px;
  border-right: 1px solid #999;
  border-bottom: 1px solid #999;
}
.step svg {
  width: 10px;
  height: 10px;
}
.slant {
  width: 8px;
  height: 16px;
}
.layout {
  padding: 0 5px;
  border-bottom: 1px solid #aaa;
}
.layout.active {
  padding: 0 3px;
  border-color: #fff;
  background: #fff;
  font-size: 12px;
  font-weight: bold;
}

/* Tool palette */
.palette {
  display: flex;
  flex: none;
  flex-direction: column;
  width: 159px;
  margin-left: 1px;
  border-left: 5px solid #6c6c6e;
  background: #f0f0f0;
}
.palette h2 {
  display: flex;
  align-items: center;
  gap: 6px;
  height: 20px;
  margin: 0;
  padding-left: 3px;
  background: #a0a0a0;
  font-size: 16px;
  line-height: 20px;
}
.dots {
  width: 4px;
  height: 14px;
  background: repeating-conic-gradient(#333 0 25%, transparent 0 50%) 0 0 / 2px 2px;
}
.palette-body {
  display: flex;
  flex: 1;
  min-height: 0;
  padding: 3px 1px 4px 0;
}
.palette-tabs {
  display: flex;
  flex-direction: column;
  align-items: flex-end;
  width: 20px;
  font-family: "Noto Sans CJK SC", sans-serif;
}
.palette-tabs > button {
  flex: none;
  width: 19px;
  padding: 17px 0;
  line-height: 18px;
  writing-mode: vertical-rl;
  text-orientation: sideways;
  transform: rotate(180deg);
}
.palette-tabs > .active {
  padding: 4px 0;
  border-right: 1px solid #777;
  border-bottom: 1px solid #777;
  background: #fafafa;
}
.palette-tabs > .last {
  flex: 1;
  padding: 0;
}
.tab-scroll {
  display: flex;
  gap: 1px;
}
.tab-scroll button {
  display: grid;
  place-items: center;
  width: 7px;
  height: 32px;
  border: 1px solid #aaa;
}
.tab-scroll svg {
  width: 4px;
  height: 6px;
}
.palette-list {
  display: flex;
  flex: 1;
  min-width: 0;
  border: 1px solid #868686;
  overflow: hidden;
}
.commands {
  flex: 1;
  padding: 0 1px;
}
.commands button {
  display: flex;
  align-items: center;
  gap: 3px;
  width: 100%;
  height: 38px;
  padding-left: 3px;
  border: 1px solid transparent;
  font-family: "Noto Sans CJK SC", sans-serif;
}
.commands svg {
  width: 32px;
  height: 32px;
}
.commands .active {
  border-color: #cdb878;
  border-radius: 2px;
  background: linear-gradient(#fffbe2, #ffe89c 38%, #ffd040 42%, #ffd65a 65%, #fff0a8);
  color: #6b5a32;
}
.scrollbar {
  display: flex;
  flex-direction: column;
  align-items: center;
  width: 16px;
  padding: 6px 0;
}
.scrollbar svg {
  width: 8px;
  height: 5px;
  fill: none;
  stroke: #444;
  stroke-width: 2px;
}
.thumb {
  width: 15px;
  height: 81px;
  margin: 67px 0 auto;
  background: #cdcdcd;
}
.callout {
  position: absolute;
  top: 81px;
  left: 350px;
  width: 194px;
  height: 50px;
}

/* Status bar */
.status-bar {
  display: flex;
  flex: none;
  align-items: center;
  height: 22px;
  border-top: 2px solid #a5a9b4;
  background: linear-gradient(#d3d6dd, #a9adb8 50%, #bcc0ca);
  color: #3e424b;
}
.status-bar span {
  height: 18px;
  padding-left: 4px;
  border-right: 1px solid #8c8f96;
  line-height: 18px;
}
.status-bar .message {
  flex: 1;
  font-size: 13px;
}
.status-bar .spacer {
  width: 10px;
}
.status-bar .coords {
  width: 144px;
  font-size: 11px;
}
.status-bar .renderer {
  width: 42px;
  font-size: 11px;
}
.resize {
  width: 12px;
  height: 12px;
  margin: 5px 2px 0 5px;
  fill: #777b85;
}
```
